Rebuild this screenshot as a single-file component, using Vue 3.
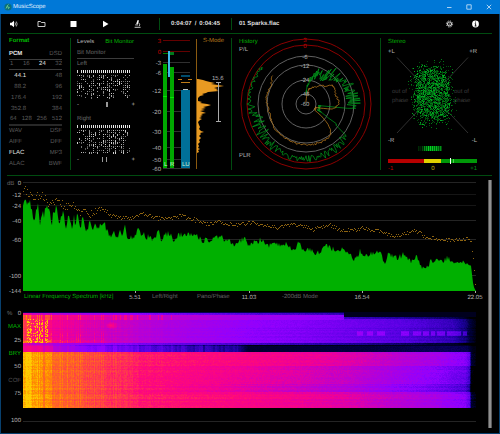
<script setup>
import { onMounted, ref } from 'vue'

function makeRandom(seed) {
  let s = seed
  return () => {
    s = (s * 1664525 + 1013904223) % 4294967296
    return s / 4294967296
  }
}

function interpolate(points, x) {
  if (x <= points[0][0]) return points[0][1]
  for (let i = 1; i < points.length; i++) {
    if (x <= points[i][0]) {
      const [x0, y0] = points[i - 1]
      const [x1, y1] = points[i]
      return y0 + ((y1 - y0) * (x - x0)) / (x1 - x0)
    }
  }
  return points[points.length - 1][1]
}

/* Format panel */
const bitDepths = ['1', '16', '24', '32']
const sampleRates = [['44.1', '48'], ['88.2', '96'], ['176.4', '192'], ['352.8', '384']]
const dsdRates = ['64', '128', '256', '512']
const containers = [['WAV', 'DSF'], ['AIFF', 'DFF'], ['FLAC', 'MP3'], ['ALAC', 'BWF']]

/* Bit monitor: one column per bit, grouped; the first row is always lit */
function bitPattern(seed) {
  const rnd = makeRandom(seed)
  const cells = []
  for (let c = 0; c < 27; c++) {
    if (c !== 1) cells.push({ x: c * 2, y: 0, h: 3, o: 0.8 + rnd() * 0.2 })
    const density = c < 6 ? 0.4 : 0.35 + rnd() * 0.4
    for (let r = 0; r < 12; r++) {
      if (rnd() < density) cells.push({ x: c * 2, y: 5 + r * 2, h: rnd() < 0.3 ? 2 : 1, o: 0.3 + rnd() * 0.55 })
    }
  }
  return cells
}
const channels = [
  { name: 'Left', cells: bitPattern(11), marks: [29, 30] },
  { name: 'Right', cells: bitPattern(47), marks: [25, 29] },
]

/* Level meter */
const meterScale = [
  ['3', 40, 'over'], ['0', 51, 'over'], ['-3', 62, ''], ['-6', 72, ''], ['-12', 90, ''],
  ['-20', 111, ''], ['-30', 131, ''], ['-40', 147, ''], ['-50', 159, ''], ['-60', 168, ''],
]
const loudnessShape = [
  [79, 1], [80, 6], [81, 9], [82, 13], [83, 18], [84, 14], [85, 21], [86, 27], [87, 21], [88, 17], [89, 21],
  [90, 19], [91, 22], [92, 11], [93, 9], [94, 5], [95, 7], [96, 3], [97, 2], [98, 1], [101, 1], [102, 5], [103, 3],
  [104, 10], [105, 14], [106, 11], [107, 6], [108, 9], [109, 4], [110, 8], [111, 3], [112, 6], [113, 9], [114, 4],
  [115, 6], [116, 3], [117, 5], [118, 2], [119, 5], [120, 3], [122, 1], [125, 2], [127, 3], [129, 2], [131, 4],
  [132, 7], [133, 3], [134, 4], [136, 2], [138, 4], [140, 2], [142, 3], [144, 1], [146, 2], [148, 1], [149, 3],
  [150, 1], [152, 2], [153, 0],
]
const loudnessPath = 'M197 79' + loudnessShape.map(([y, w]) => `L${197 + w} ${y}`).join('') + 'L197 153Z'

/* History radar, in degrees clockwise from the top */
const cx = 306
const cy = 104
const polar = (deg, r) => {
  const a = (deg * Math.PI) / 180
  return `${(cx + r * Math.sin(a)).toFixed(1)} ${(cy - r * Math.cos(a)).toFixed(1)}`
}
const peakLow = [[0, 8], [10, 22], [25, 28], [38, 24], [45, 33], [60, 40], [80, 40], [96, 40], [97, 12], [118, 12], [128, 46], [150, 50], [200, 53], [225, 47], [245, 44], [262, 46], [275, 54], [310, 55]]
const peakHigh = [[0, 13], [6, 26], [20, 38], [32, 37], [38, 50], [55, 50], [75, 54], [92, 55], [96, 52], [97, 16], [118, 18], [128, 55], [150, 58], [200, 58], [260, 59], [310, 59]]
const averageTrace = [[0, 2], [5, 8], [10, 15], [28, 19], [42, 25], [48, 26], [54, 33], [72, 31], [90, 33], [100, 28], [108, 10], [125, 11], [131, 27], [137, 37], [145, 40], [160, 41], [180, 41], [210, 40], [225, 40], [250, 38], [263, 38], [280, 40], [300, 40], [311, 44]]
function peakTrace() {
  const rnd = makeRandom(5)
  const pts = []
  for (let d = 0; d <= 310; d += 1) {
    const lo = interpolate(peakLow, d)
    const hi = interpolate(peakHigh, d)
    const t = d > 255 ? Math.pow(rnd(), 0.6) : Math.pow(rnd(), 1.2)
    pts.push(polar(d, lo + (hi - lo) * t))
  }
  return 'M' + pts.join('L')
}
function meanTrace() {
  const rnd = makeRandom(21)
  const pts = []
  for (let d = 0; d <= 311; d += 1.6) pts.push(polar(d, interpolate(averageTrace, d) + (rnd() - 0.5) * 2))
  return 'M' + pts.join('L')
}
const peakPath = peakTrace()
const meanPath = meanTrace()
const rings = [[65, 'ring hot'], [59, 'ring hot'], [48, 'ring'], [39, 'ring'], [24, 'ring'], [10, 'ring']]
const ringLabels = [['3', 40, 'over'], ['0', 46, 'over'], ['-6', 57, ''], ['-12', 66, ''], ['-24', 80, ''], ['-48', 94, ''], ['-60', 104, '']]

/* Stereo goniometer */
function cloudPaths() {
  const rnd = makeRandom(99)
  const layers = ['', '', '']
  for (let i = 0; i < 2600; i++) {
    const spread = 0.72 + rnd() * rnd() * 0.55
    const u = rnd() * 2 - 1
    const v = rnd() * 2 - 1
    if (Math.pow(Math.abs(u), 3) + Math.pow(Math.abs(v), 3) > 1) continue
    const x = Math.round(432 + u * 21 * spread + v * 1)
    const y = Math.round(94 + v * 31 * spread)
    const k = rnd() < 0.6 ? 0 : rnd() < 0.75 ? 1 : 2
    layers[k] += `M${x} ${y}.5h1`
  }
  return layers
}
const cloud = cloudPaths()
const stripes = Array.from({ length: 12 }, (_, i) => ({ x: 418 + i * 2, o: [0.2, 0.15, 0.35, 0.7, 0.8, 1, 1, 1, 0.9, 0.9, 0.7, 0.7][i] }))

/* Frequency spectrum; points are in thirds of a unit from the plot corner */
const spectrumShape = [
  [68, 105], [70, 95], [76, 72], [82, 92], [90, 85], [95, 112], [102, 140], [108, 115], [114, 90], [120, 155], [128, 100], [133, 130], [137, 95],
  [145, 112], [151, 110], [155, 163], [160, 100], [165, 115], [170, 95], [178, 155], [190, 103], [197, 165], [207, 122], [215, 165], [222, 125],
  [226, 155], [232, 122], [243, 160], [250, 112], [256, 180], [265, 155], [271, 138], [278, 165], [285, 150], [295, 160], [313, 145], [322, 178],
  [330, 185], [345, 172], [350, 190], [362, 166], [367, 192], [374, 150], [380, 190], [400, 188], [410, 180], [415, 153], [422, 185], [430, 180],
  [440, 192], [450, 180], [460, 205], [475, 168], [482, 195], [500, 180], [512, 178], [520, 200], [540, 182], [570, 183], [585, 182], [600, 195],
  [610, 207], [620, 180], [625, 212], [640, 188], [660, 195], [668, 188], [675, 203], [690, 195], [697, 215], [710, 200], [735, 195], [745, 212],
  [755, 205], [770, 205], [788, 195], [800, 215], [820, 210], [845, 214], [860, 208], [875, 227], [895, 210], [915, 228], [930, 225], [950, 243],
  [980, 212], [995, 224], [1015, 225], [1040, 232], [1065, 256], [1080, 232], [1095, 247], [1135, 232], [1155, 262], [1165, 240], [1190, 252],
  [1215, 240], [1230, 262], [1250, 250], [1270, 282], [1295, 262], [1320, 264], [1345, 250], [1365, 265], [1390, 267], [1413, 275], [1420, 335],
  [1427, 351],
]
const maximumShape = [
  [68, 60], [75, 48], [90, 66], [130, 63], [145, 88], [165, 80], [185, 88], [200, 98], [220, 92], [235, 110], [270, 118], [295, 102], [315, 106], [330, 122],
  [365, 130], [400, 128], [430, 120], [470, 132], [500, 132], [540, 124], [580, 135], [620, 148], [660, 142], [700, 152], [745, 147], [755, 144],
  [800, 155], [830, 161], [870, 150], [900, 152], [940, 165], [985, 152], [1030, 168], [1090, 162], [1135, 170], [1180, 185], [1240, 170],
  [1260, 177], [1280, 190], [1330, 195], [1360, 198], [1405, 191], [1413, 205], [1420, 260], [1425, 330],
]
function spectrumPath() {
  const rnd = makeRandom(77)
  let d = 'M23 291'
  for (let x = 23; x <= 475; x++) {
    const jitter = x > 470 ? 0 : (rnd() - 0.5) * (x < 120 ? 7 : 6)
    d += `L${x} ${(174 + interpolate(spectrumShape, x * 3) / 3 + jitter).toFixed(1)}`
  }
  return d + 'L476 291Z'
}
function maximumPath() {
  const rnd = makeRandom(31)
  let d = ''
  for (let x = 23; x <= 475; x++) {
    const y = Math.round(174 + interpolate(maximumShape, x * 3) / 3 + (rnd() - 0.5) * (x < 100 ? 8 : 4))
    d += `M${x} ${y}.5h1`
  }
  return d
}
const spectrum = spectrumPath()
const maximum = maximumPath()
const dbScale = [['0', 182], ['-12', 194], ['-24', 205], ['-40', 220], ['-60', 239], ['-100', 275], ['-144', 290]]
const dbLines = [[182, '#242424'], [194, '#161616'], [205, '#161616'], [220, '#242424'], [239, '#242424'], [275, '#242424']]
const frequencies = [['5.51', 135], ['11.03', 249], ['16.54', 362], ['22.05', 475]]

/* Spectrogram */
const progressLabels = [
  { text: '0', kind: '', unit: '%' },
  { text: 'MAX', kind: 'on' },
  { text: '25', kind: '' },
  { text: 'BRY', kind: 'on' },
  { text: '50', kind: '' },
  { text: 'COF', kind: 'off' },
  { text: '75', kind: '' },
  { text: '', kind: '' },
  { text: '100', kind: '' },
]
const palette = [
  [0, [0, 0, 0]], [0.1, [0, 0, 60]], [0.2, [30, 0, 160]], [0.3, [85, 0, 225]], [0.42, [145, 0, 255]], [0.55, [190, 0, 205]],
  [0.65, [240, 0, 150]], [0.72, [255, 10, 120]], [0.82, [255, 75, 60]], [0.92, [255, 140, 0]], [1, [255, 205, 0]],
]
const shade = (v) => [0, 1, 2].map((i) => interpolate(palette.map(([t, c]) => [t, c[i]]), v))
const lut = Array.from({ length: 257 }, (_, i) => shade(i / 256))
const upperLevel = [[0, 0.82], [6, 0.72], [25, 0.68], [60, 0.61], [100, 0.56], [140, 0.5], [226, 0.42], [300, 0.37], [380, 0.3], [430, 0.23], [442, 0.16], [446, 0.1], [452, 0.03]]
const gapLevel = [[0, 0.7], [25, 0.6], [50, 0.47], [80, 0.4], [120, 0.32], [170, 0.24], [215, 0.18], [225, 0.08], [350, 0.1], [420, 0.13], [444, 0.12], [450, 0.03]]
const lowerLevel = [[0, 1], [8, 0.97], [20, 0.91], [40, 0.87], [80, 0.8], [120, 0.74], [200, 0.7], [270, 0.66], [330, 0.61], [370, 0.54], [410, 0.48], [442, 0.4], [446, 0.32], [448, 0.08], [452, 0.03]]
const bandDepth = [[90, 0], [200, 0.05], [300, 0.09], [452, 0.12]]

const heat = ref(null)
onMounted(() => {
  const canvas = heat.value
  const w = canvas.width
  const h = canvas.height
  const ctx = canvas.getContext('2d')
  const image = ctx.createImageData(w, h)
  const rnd = makeRandom(8)
  const col = Array.from({ length: w }, () => rnd() - 0.5)
  const row = Array.from({ length: h }, () => rnd() - 0.5)
  for (let y = 0; y < h; y++) {
    for (let x = 0; x < w; x++) {
      const n = rnd() - 0.5
      const fade = Math.max(0, 1 - x / 180)
      let v
      if (y < 33) {
        v = interpolate(upperLevel, x) + n * 0.03 + col[x] * 0.06 * fade + row[y] * 0.03
        if (y < 1) v = Math.min(v, 0.12)
        else if (y < 3) v -= 0.13
        else if (y < 8 && x < 321) v += x > 150 ? 0.05 : 0.04 + (col[x] > 0.25 ? 0.08 : 0)
        if (y < 5 && x > 320) v = 0.05
        if (y >= 5 && y < 7 && x > 320) v -= 0.1
        if (y > 30) v -= 0.15
        if (x > 3 && x < 25 && y > 6 && y < 31) v += rnd() < 0.25 + col[x] * 0.7 ? 0.26 : 0.03
        if (x < 90 && y > 27 && y < 31) v += rnd() * 0.14 * (1 - x / 110)
        if (x >= 25 && x < 90 && y > 20 && y < 31 && col[x] > 0.2) v += rnd() * 0.1
        const spot = Math.hypot((x - 88) / 6, (y - 13) / 4)
        if (spot < 1) v += 0.14 * (1 - spot)
        if (y > 18 && y < 24 && x > 330 && x < 447 && col[x - (x % 2)] > -0.1) v += (y === 19 || y === 23 ? 0.03 : 0.07) + x / 10000
      } else if (y < 40) {
        v = interpolate(gapLevel, x) + n * 0.02 + col[x - (x % 2)] * 0.07 * (x < 215 ? 1 : 0)
        if (y === 33) v -= 0.06
      } else {
        v = interpolate(lowerLevel, x) + n * 0.05 + row[y] * 0.045 + col[x] * 0.08 * fade
        if (y >= 72 && y < 80) v -= interpolate(bandDepth, x)
        if (y >= 54 && y < 72) v -= interpolate(bandDepth, x) * 0.5
      }
      const c = lut[Math.round(Math.max(0, Math.min(1, v)) * 256)]
      const i = (y * w + x) * 4
      image.data[i] = c[0]
      image.data[i + 1] = c[1]
      image.data[i + 2] = c[2]
      image.data[i + 3] = 255
    }
  }
  ctx.putImageData(image, 0, 0)
})
</script>

<template>
  <div class="window">
    <header class="titlebar">
      <svg class="logo" viewBox="0 0 8 8" aria-hidden="true">
        <circle cx="4" cy="4" r="3.6" fill="#0b6f7c" />
        <path d="M2 5.5L3.5 2.5 4.5 5.5 5.5 4M3.5 2.5L4.5 1.5" fill="none" stroke="#6fd08a" stroke-width="0.9" />
      </svg>
      <span class="app-name">MusicScope</span>
      <button class="win-button" aria-label="Minimize">
        <svg viewBox="0 0 6 6"><path d="M1 3.5h4.500" /></svg>
      </button>
      <button class="win-button" aria-label="Maximize">
        <svg viewBox="0 0 6 6"><path d="M.8.800h4.400v4.400h-4.400z" /></svg>
      </button>
      <button class="win-button" aria-label="Close">
        <svg viewBox="0 0 6 6"><path d="M.8.800l4.400 4.400M5.200.800L.8 5.200" /></svg>
      </button>
    </header>

    <div class="content">
      <nav class="toolbar">
        <button class="tool first" aria-label="Volume">
          <svg viewBox="0 0 9 8">
            <path d="M1 2.800h1.600L5 .8v6.400L2.600 5.200H1z" fill="#fff" />
            <path d="M6 2.400q1 1.600 0 3.200M7.300 1.500q1.700 2.500 0 5" fill="none" stroke="#ccc" stroke-width="0.8" />
          </svg>
        </button>
        <button class="tool" aria-label="Open">
          <svg viewBox="0 0 9 8"><path d="M1 6.500V1.500h2.500l.8 1h3.700v4z" fill="none" stroke="#ddd" stroke-width="0.9" /></svg>
        </button>
        <button class="tool" aria-label="Stop">
          <svg viewBox="0 0 9 8"><path d="M1.500 1h6v6h-6z" fill="#fff" /></svg>
        </button>
        <button class="tool" aria-label="Play">
          <svg viewBox="0 0 9 8"><path d="M2 .8L7.500 4 2 7.200z" fill="#fff" /></svg>
        </button>
        <button class="tool" aria-label="Analyze">
          <svg viewBox="0 0 9 8">
            <path d="M4.600 0l1.400.6-1.300 3.700-1.500-.6z" fill="#fff" />
            <path d="M5.400 2.600q2.200 1.500.8 3.600M2.200 4.900h2.800M1.600 7.300h6" fill="none" stroke="#ddd" stroke-width="0.9" />
          </svg>
        </button>
        <div class="clock"><span>0:04:07</span><span>/</span><span>0:04:45</span></div>
        <div class="track">01 Sparks.flac</div>
        <button class="tool end" aria-label="Settings">
          <svg viewBox="0 0 9 8">
            <circle cx="4.500" cy="4" r="2" fill="none" stroke="#ccc" stroke-width="1.200" />
            <circle cx="4.500" cy="4" r="3.100" fill="none" stroke="#ccc" stroke-width="0.9" stroke-dasharray="1.300 1.135" />
            <circle cx="4.500" cy="4" r=".6" fill="#ccc" />
          </svg>
        </button>
        <button class="tool end" aria-label="Information">
          <svg viewBox="0 0 9 8">
            <circle cx="4.500" cy="4" r="3.400" fill="#fff" />
            <path d="M4.500 1.600v1M3.800 3.600h.8v2.300M3.600 6h1.900" fill="none" stroke="#000" stroke-width="0.9" />
          </svg>
        </button>
      </nav>

      <section class="panels">
        <div class="format">
          <h2 class="heading on">Format</h2>
          <div class="pair type"><b class="lit">PCM</b><span>DSD</span></div>
          <div class="pair depths">
            <span v-for="d in bitDepths" :key="d" :class="{ lit: d === '24' }">{{ d }}</span>
          </div>
          <div class="rates">
            <div v-for="r in sampleRates" :key="r[0]" class="pair line">
              <span class="rate" :class="{ lit: r[0] === '44.1' }">{{ r[0] }}</span><span>{{ r[1] }}</span>
            </div>
          </div>
          <div class="pair dsd"><span v-for="d in dsdRates" :key="d">{{ d }}</span></div>
          <div v-for="c in containers" :key="c[0]" class="pair line">
            <span :class="{ lit: c[0] === 'FLAC' }">{{ c[0] }}</span><span>{{ c[1] }}</span>
          </div>
        </div>

        <div class="levels">
          <div class="bits">
            <div class="tabs">
              <button class="tab">Levels</button>
              <button class="tab on">Bit Monitor</button>
            </div>
            <div class="subtitle">Bit Monitor</div>
            <div class="channels">
              <div v-for="c in channels" :key="c.name">
                <div class="channel-name">{{ c.name }}</div>
                <svg viewBox="0 0 57 40">
                  <rect v-for="(b, i) in c.cells" :key="i" :x="b.x" :y="b.y" width="1" :height="b.h" fill="#fff" :fill-opacity="b.o" />
                  <text x="0" y="36">-</text>
                  <rect v-for="m in c.marks" :key="m" :x="m" y="32" width="1" height="5" fill="#999" />
                  <text x="58" y="36" text-anchor="end">+</text>
                </svg>
              </div>
            </div>
          </div>
          <svg class="meter" viewBox="148 38 83 132">
            <template v-for="s in meterScale" :key="s[0]">
              <rect x="163" :y="s[1]" width="27" height="1" :fill="s[2] ? '#640000' : '#303030'" />
              <text x="161" :y="s[1] + 3" text-anchor="end" :class="s[2]">{{ s[0] }}</text>
            </template>
            <rect x="163" y="53" width="5" height="1" fill="#008000" />
            <rect x="163" y="64" width="4" height="104" fill="#00a800" />
            <rect x="163" y="96" width="4" height="1" fill="#00e800" />
            <rect x="170" y="52" width="4" height="3" fill="#007a1c" />
            <rect x="170" y="67" width="4" height="101" fill="#00a800" />
            <rect x="170" y="97" width="4" height="1" fill="#00e800" />
            <rect x="168" y="51" width="2" height="26" fill="#40b8e8" />
            <rect x="181" y="90" width="9" height="78" fill="#007099" />
            <rect x="183" y="89" width="5" height="1" fill="#b8c4c8" />
            <rect x="181" y="75" width="9" height="2" fill="#004c6c" />
            <path d="M178 79.500h4M188 79.500h4M181 82.500h9" stroke="#c07c18" />
            <text x="164" y="166" class="bar-name">L</text>
            <text x="170" y="166" class="bar-name">R</text>
            <text x="182" y="166" class="bar-name">LU</text>
            <rect x="196" y="39" width="1" height="130" fill="#8a5a10" />
            <path :d="loudnessPath" fill="#e89a22" />
            <text x="203" y="42" class="mode">S-Mode</text>
            <text x="212" y="80">15.6</text>
            <path d="M218.500 82.500v39M216 82.500h5M216 121.500h5" stroke="#aaa" fill="none" />
          </svg>
        </div>

        <svg class="history" viewBox="232 38 148 132">
          <circle v-for="r in rings" :key="r[0]" :cx="cx" :cy="cy" :r="r[0]" :class="r[1]" />
          <path :d="peakPath" class="trace" stroke="#00a01c" />
          <path :d="meanPath" class="trace" stroke="#c88420" />
          <text v-for="l in ringLabels" :key="l[0]" x="305" :y="l[1] + 2" text-anchor="middle" :class="l[2]">{{ l[0] }}</text>
          <text x="239" y="43" class="on">History</text>
          <text x="239" y="51">P/L</text>
          <text x="239" y="157">PLR</text>
        </svg>

        <svg class="stereo" viewBox="381 38 111 132">
          <path d="M397 57.500L468 133M468 57.500L397 133" stroke="#303030" />
          <path :d="cloud[0]" stroke="#004d0c" />
          <path :d="cloud[1]" stroke="#007816" />
          <path :d="cloud[2]" stroke="#00a820" />
          <text x="388" y="43" class="on">Stereo</text>
          <text x="388" y="53">+L</text>
          <text x="477" y="53" text-anchor="end">+R</text>
          <text x="388" y="142">-R</text>
          <text x="477" y="142" text-anchor="end">-L</text>
          <g class="faint">
            <text x="392" y="93">out of</text>
            <text x="392" y="102">phase</text>
            <text x="454" y="93">out of</text>
            <text x="454" y="102">phase</text>
          </g>
          <rect v-for="s in stripes" :key="s.x" :x="s.x" y="146" width="1.500" height="5" fill="#00d020" :fill-opacity="s.o" />
          <rect x="388" y="159" width="36" height="4" fill="#b80000" />
          <rect x="424" y="159" width="17" height="4" fill="#e0d000" />
          <rect x="441" y="159" width="36" height="4" fill="#009808" />
          <rect x="450" y="158" width="1" height="6" fill="#fff" />
          <rect x="453" y="159" width="1" height="4" fill="#50d050" />
          <text x="388" y="170" class="over">-1</text>
          <text x="433" y="170" text-anchor="middle" class="neutral">0</text>
          <text x="477" y="170" text-anchor="end" class="good">+1</text>
        </svg>
      </section>

      <main class="analysis">
        <div class="charts">
          <svg class="spectrum" viewBox="7 176 481 130">
            <rect v-for="l in dbLines" :key="l[0]" x="23" :y="l[0]" width="453" height="1" :fill="l[1]" />
            <path :d="spectrum" fill="#00b000" />
            <path :d="maximum" stroke="#8e6410" />
            <text x="7" y="185" class="dim">dB</text>
            <text v-for="s in dbScale" :key="s[0]" x="21" :y="s[1] + 3" text-anchor="end">{{ s[0] }}</text>
            <template v-for="f in frequencies" :key="f[0]">
              <rect :x="f[1]" y="291" width="1" height="2" fill="#aaa" />
              <text :x="f[1]" y="299" text-anchor="middle">{{ f[0] }}</text>
            </template>
            <text x="24" y="298" class="on">Linear Frequency Spectrum [kHz]</text>
            <text x="152" y="298" class="dim">Left/Right</text>
            <text x="197" y="298" class="dim">Pano/Phase</text>
            <text x="282" y="298" class="dim">-200dB Mode</text>
          </svg>
          <div class="spectrogram">
            <div class="progress">
              <div v-for="(p, i) in progressLabels" :key="i" :class="p.kind">
                <span v-if="p.unit" class="unit">{{ p.unit }}</span>{{ p.text }}
              </div>
            </div>
            <div class="plot"><canvas ref="heat" width="453" height="96"></canvas></div>
          </div>
        </div>
        <div class="scrollbar"></div>
      </main>
    </div>
  </div>
</template>

<style>
body {
  margin: 0;
  background: #000;
}
</style>

<style scoped>
.window {
  display: flex;
  flex-direction: column;
  min-height: 100vh;
  background: #000;
  color: #b4b4b4;
  font: 6px/7px "Liberation Sans", sans-serif;
  text-rendering: geometricPrecision;
}
button {
  display: flex;
  align-items: center;
  justify-content: center;
  padding: 0;
  border: 0;
  background: none;
  color: inherit;
  font: inherit;
}
svg {
  display: block;
  overflow: visible;
}
svg text {
  fill: #b4b4b4;
}
.titlebar {
  display: flex;
  align-items: center;
  height: 14px;
  padding: 0 1px 0 4px;
  background: #0078d7;
}
.logo {
  width: 8px;
  height: 8px;
}
.app-name {
  flex: 1;
  padding-left: 1px;
  color: #e4f0fc;
}
.win-button {
  width: 20px;
  height: 13px;
}
.win-button svg {
  width: 6px;
  height: 6px;
  fill: none;
  stroke: #d4e8fa;
  stroke-width: 0.8;
}
.content {
  display: flex;
  flex: 1;
  flex-direction: column;
  padding: 0 7px 5px 6px;
  border: solid #08406e;
  border-width: 0 1px 1px;
}
.toolbar {
  display: flex;
  align-items: center;
  height: 19px;
  margin-left: -6px;
  position: relative;
}
.toolbar::after {
  content: "";
  position: absolute;
  right: 0;
  bottom: -1px;
  left: 6px;
  border-bottom: 1px solid #004c10;
}
.tool {
  width: 32px;
  height: 18px;
}
.tool.first {
  width: 24px;
}
.tool.end {
  width: 26px;
}
.tool.end:last-child {
  margin-right: 4px;
}
.tool svg {
  width: 9px;
  height: 8px;
}
.clock,
.track {
  height: 12px;
  border-left: 1px solid #004c10;
  color: #ddd;
  font-weight: bold;
  line-height: 12px;
}
.clock {
  display: flex;
  justify-content: space-between;
  width: 49px;
  margin-left: 6px;
  padding: 0 11px;
}
.track {
  flex: 1;
  padding-left: 7px;
}
.panels {
  display: grid;
  grid-template-columns: 63fr 161fr 149fr 112fr;
  margin-top: 1px;
  padding: 4px 0 5px;
  border-bottom: 1px solid #004c10;
}
.levels,
.history,
.stereo {
  border-left: 1px solid #004c10;
}
.format {
  padding: 0 8px 0 2px;
  color: #5c5c5c;
}
.heading {
  margin: 0 0 4px;
  font-size: 6px;
  line-height: 7px;
}
.on {
  color: #00b400;
}
svg .on {
  fill: #00b400;
}
.pair {
  display: flex;
  justify-content: space-between;
}
.lit {
  color: #e8e8e8;
}
.type {
  border-bottom: 1px solid #3c3c3c;
  line-height: 10px;
}
.depths {
  padding-left: 1px;
  border-bottom: 1px solid #3c3c3c;
  line-height: 9px;
}
.rates {
  padding-top: 1px;
}
.line {
  line-height: 11px;
}
.rate {
  width: 17px;
  text-align: right;
}
.dsd {
  padding-left: 1px;
  border-bottom: 2px solid #282828;
  line-height: 9px;
}
.levels {
  display: grid;
  grid-template-columns: 77fr 83fr;
}
.bits {
  padding: 0 14px 0 6px;
}
.tabs {
  display: flex;
  justify-content: space-between;
  height: 7px;
  margin-bottom: 4px;
}
.tab {
  white-space: nowrap;
}
.subtitle {
  border-bottom: 1px solid #3c3c3c;
  color: #646464;
  line-height: 9px;
}
.channels {
  display: grid;
  gap: 4px;
}
.channel-name {
  color: #6c6c6c;
  line-height: 11px;
}
.over {
  fill: #c80000;
}
.bar-name {
  fill: #d0f0d0;
}
.mode {
  fill: #b87a1c;
}
.ring {
  fill: none;
  stroke: #606060;
}
.hot {
  stroke: #8c0000;
}
.trace {
  fill: none;
  stroke-width: 0.7;
}
.faint text {
  fill: #3c3c3c;
}
.neutral {
  fill: #c8b800;
}
.good {
  fill: #009018;
}
.dim {
  fill: #646464;
}
.analysis {
  display: flex;
  flex: 1;
}
.charts {
  flex: 1;
}
.scrollbar {
  width: 2px;
  margin: 4px 0 0;
  border: solid #585858;
  border-width: 0 1px;
  background: #909090;
}
.spectrogram {
  display: flex;
  padding: 2px 12px 0 0;
}
.progress {
  display: grid;
  grid-auto-rows: 1fr;
  align-items: center;
  width: 14px;
  height: 120px;
  margin-right: 2px;
  text-align: right;
}
.progress div {
  display: flex;
  justify-content: flex-end;
}
.unit {
  flex: 1;
  text-align: left;
  color: #707070;
}
.off {
  color: #505050;
}
.plot {
  flex: 1;
  padding: 4px 0 13px;
  margin-bottom: 6px;
  border-bottom: 1px solid #242424;
}
canvas {
  display: block;
  width: 100%;
  height: 96px;
}
</style>
